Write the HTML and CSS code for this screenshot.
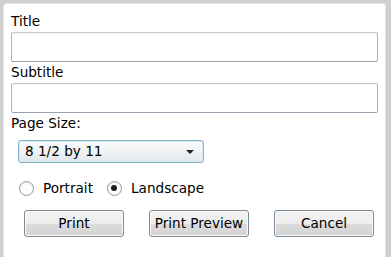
FILE: index.html
```html
<!DOCTYPE html>
<html>
<head>
<meta charset="utf-8">
<link rel="stylesheet" href="styles.css">
</head>
<body>
<div class="panel">
  <div class="label">Title</div>
  <div class="textbox"></div>
  <div class="label">Subtitle</div>
  <div class="textbox"></div>
  <div class="label">Page Size:</div>
  <div class="combo">
    <span class="combo-text">8 1/2 by 11</span>
    <svg class="arrow" width="8" height="4" viewBox="0 0 8 4"><path d="M0 0H8L4 4Z" fill="#222"/></svg>
  </div>
  <div class="radios">
    <label class="radio"><span class="circle"></span>Portrait</label>
    <label class="radio"><span class="circle checked"></span>Landscape</label>
  </div>
  <div class="buttons">
    <div class="btn">Print</div>
    <div class="btn">Print Preview</div>
    <div class="btn">Cancel</div>
  </div>
</div>
</body>
</html>
```
FILE: styles.css
```css
html, body {
  margin: 0;
  padding: 0;
  background: #cfcfcf;
  width: 391px;
  height: 257px;
  overflow: hidden;
  font-family: "DejaVu Sans", Verdana, sans-serif;
  font-size: 13.6px;
  color: #000;
}

.panel {
  margin: 3px 5px 0 3px;
  height: 238px;
  background: #fff;
  border: 1px solid #e4e4e4;
  border-radius: 3px;
  padding: 10px 7px 9px 7px;
  box-sizing: content-box;
  display: flex;
  flex-direction: column;
}

.label {
  line-height: 15px;
  height: 15px;
  margin-bottom: 3px;
}

.textbox {
  height: 28px;
  border: 1px solid #abb3bd;
  border-top-color: #c7ccd3;
  border-bottom-color: #98a2ae;
  border-radius: 2px;
  margin-bottom: 3px;
  box-shadow: inset 0 1px 0 #eef0f3;
}

.combo {
  margin: 6px 0 0 7px;
  width: 186px;
  height: 23px;
  box-sizing: border-box;
  border: 1px solid #7fb0c7;
  border-radius: 3px;
  background: linear-gradient(#fafbfc, #f0f2f4 50%, #e3e7eb);
  display: flex;
  align-items: center;
  justify-content: space-between;
  padding: 0 9px 0 6px;
  box-shadow: inset 0 0 0 1px #d9edf6;
}

.combo-text {
  line-height: 15px;
}

.arrow {
  display: block;
}

.radios {
  margin: 17px 0 0 8px;
  display: flex;
  gap: 14px;
  height: 16px;
  align-items: center;
}

.radio {
  display: flex;
  align-items: center;
  gap: 9px;
}

.circle {
  width: 15px;
  height: 15px;
  box-sizing: border-box;
  border-radius: 50%;
  border: 1px solid #8e9aa6;
  background: radial-gradient(circle at 50% 60%, #ffffff 40%, #e3e6ea 100%);
  position: relative;
}

.circle.checked::after {
  content: "";
  position: absolute;
  left: 3.5px;
  top: 3.5px;
  width: 6px;
  height: 6px;
  border-radius: 50%;
  background: #1c1c1c;
}

.buttons {
  margin: 14px 0 0 13px;
  display: flex;
  gap: 25px;
}

.btn {
  width: 100px;
  height: 27px;
  box-sizing: border-box;
  border: 1px solid #7a8a99;
  border-radius: 3px;
  background: linear-gradient(#f4f4f4, #ececec 50%, #dcdcdc 51%, #d3d3d3);
  box-shadow: inset 0 0 0 1px #fbfbfb;
  display: flex;
  align-items: center;
  justify-content: center;
  line-height: 15px;
}
```
